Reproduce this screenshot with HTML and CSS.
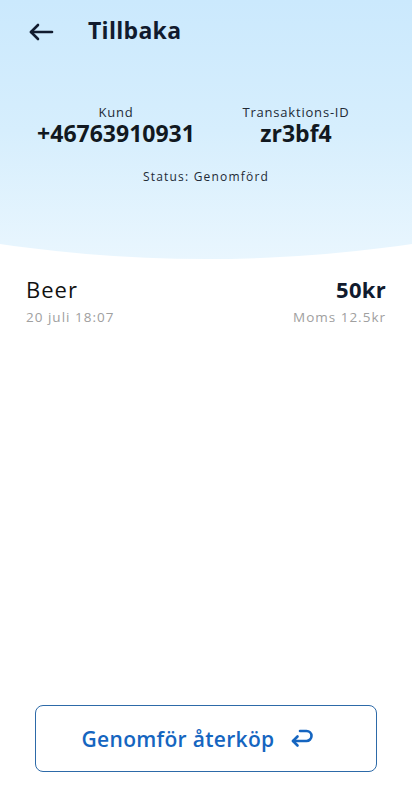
FILE: index.html
```html
<!DOCTYPE html>
<html lang="sv">
<head>
<meta charset="utf-8">
<meta name="viewport" content="width=device-width, initial-scale=1">
<title>Tillbaka</title>
<link rel="stylesheet" href="styles.css">
</head>
<body>
<div class="page">
  <header class="hero">
    <div class="topbar">
      <svg class="back" width="26" height="20" viewBox="0 0 26 20" fill="none" stroke="#111b2e" stroke-width="2.6" stroke-linecap="round" stroke-linejoin="round"><path d="M24 10H3"/><path d="M10 3L3 10l7 7"/></svg>
      <h1 class="title">Tillbaka</h1>
    </div>
    <div class="info">
      <div class="col">
        <div class="label">Kund</div>
        <div class="value">+46763910931</div>
      </div>
      <div class="col">
        <div class="label">Transaktions-ID</div>
        <div class="value">zr3bf4</div>
      </div>
    </div>
    <div class="status">Status: Genomförd</div>
  </header>

  <section class="item">
    <div class="row">
      <span class="name">Beer</span>
      <span class="price">50kr</span>
    </div>
    <div class="row sub">
      <span>20 juli 18:07</span>
      <span>Moms 12.5kr</span>
    </div>
  </section>

  <div class="actions">
    <button class="refund" type="button">
      <span>Genomför återköp</span>
      <svg width="26" height="22" viewBox="0 0 26 22" fill="none" stroke="#1565c0" stroke-width="2.6" stroke-linecap="round" stroke-linejoin="round"><path d="M11 3h6.5a5 5 0 0 1 0 10H4"/><path d="M8.5 8.5L4 13l4.5 4.5"/></svg>
    </button>
  </div>
</div>
</body>
</html>
```
FILE: styles.css
```css
* { box-sizing: border-box; }
html, body { margin: 0; padding: 0; }
body {
  font-family: "Open Sans", "Noto Sans", sans-serif;
  background: #ffffff;
  color: #111b2e;
}
.page {
  min-height: 800px;
  display: flex;
  flex-direction: column;
}
.hero {
  height: 259px;
  background: linear-gradient(180deg, #cbe9fd 0%, #d6eefd 50%, #e9f6fe 100%);
  clip-path: ellipse(613px 259px at 50% 0);
}
.topbar {
  height: 64px;
  display: flex;
  align-items: center;
  padding-left: 28px;
}
.back { display: block; }
.title {
  margin: 0 0 3px 34px;
  font-size: 23px;
  font-weight: 700;
  letter-spacing: 0.3px;
  line-height: 1;
}
.info {
  display: grid;
  grid-template-columns: 1fr 1fr;
  padding: 39px 26px 0;
  text-align: center;
}
.label {
  font-size: 13px;
  line-height: 18px;
  color: #222a36;
  letter-spacing: 0.8px;
}
.value {
  font-size: 23px;
  font-weight: 700;
  line-height: 25px;
  color: #111820;
}
.status {
  margin-top: 23px;
  text-align: center;
  font-size: 12px;
  line-height: 16px;
  letter-spacing: 1.2px;
  color: #222a36;
}
.item {
  padding: 15px 26px 0;
}
.row {
  display: flex;
  justify-content: space-between;
  align-items: baseline;
}
.name {
  font-size: 22px;
  line-height: 30px;
  color: #111;
  letter-spacing: 1px;
}
.price {
  font-size: 22px;
  font-weight: 700;
  line-height: 30px;
  color: #111b2e;
  letter-spacing: 0.3px;
}
.sub {
  margin-top: 2px;
  font-size: 13.5px;
  line-height: 22px;
  color: #a0a0a0;
  letter-spacing: 1px;
}
.actions {
  margin-top: auto;
  padding: 0 35px 28px;
}
.refund {
  width: 100%;
  height: 67px;
  border: 1.3px solid #2d6aa8;
  border-radius: 8px;
  background: #fff;
  display: flex;
  align-items: center;
  justify-content: center;
  gap: 15px;
  font-family: "Open Sans", "Noto Sans", sans-serif;
  font-size: 21px;
  font-weight: 600;
  color: #1565c0;
  letter-spacing: 0.3px;
  padding: 0 15px 0 0;
}
.refund svg { display: block; margin-top: 1px; }
```
